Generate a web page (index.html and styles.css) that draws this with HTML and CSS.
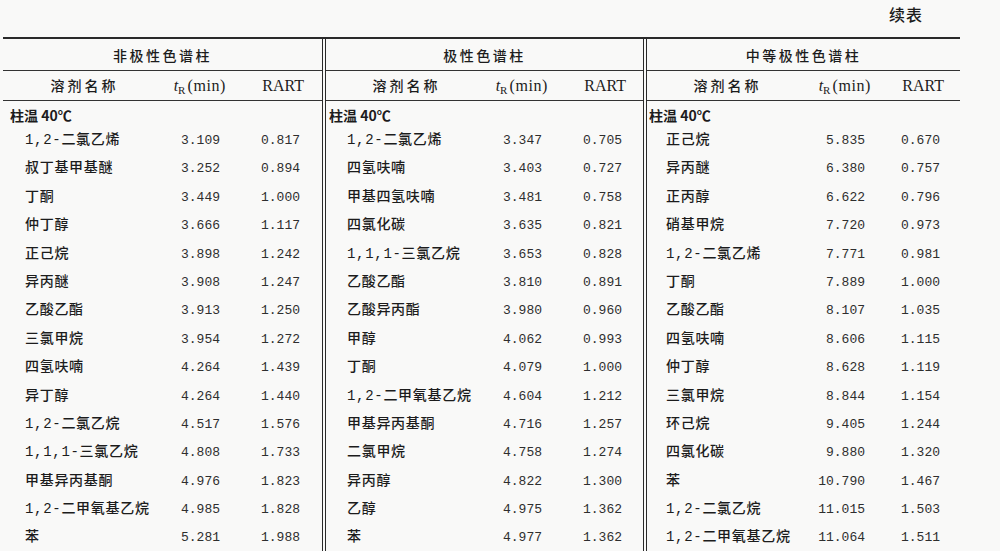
FILE: index.html
```html
<!DOCTYPE html>
<html lang="zh">
<head>
<meta charset="utf-8">
<title>续表</title>
<link rel="stylesheet" href="styles.css">
</head>
<body>
<div class="page">
  <div class="caption">续表</div>
  <div class="table">
    <section class="sec s1">
      <div class="title">非极性色谱柱</div>
      <div class="row head"><span class="hname">溶剂名称</span><span class="htr"><i>t</i><sub>R</sub><span class="par">(min)</span></span><span class="hrart">RART</span></div>
      <div class="temp">柱温 40℃</div>
      <div class="row"><span class="name">1,2-二氯乙烯</span><span class="num">3.109</span><span class="num">0.817</span></div>
      <div class="row"><span class="name">叔丁基甲基醚</span><span class="num">3.252</span><span class="num">0.894</span></div>
      <div class="row"><span class="name">丁酮</span><span class="num">3.449</span><span class="num">1.000</span></div>
      <div class="row"><span class="name">仲丁醇</span><span class="num">3.666</span><span class="num">1.117</span></div>
      <div class="row"><span class="name">正己烷</span><span class="num">3.898</span><span class="num">1.242</span></div>
      <div class="row"><span class="name">异丙醚</span><span class="num">3.908</span><span class="num">1.247</span></div>
      <div class="row"><span class="name">乙酸乙酯</span><span class="num">3.913</span><span class="num">1.250</span></div>
      <div class="row"><span class="name">三氯甲烷</span><span class="num">3.954</span><span class="num">1.272</span></div>
      <div class="row"><span class="name">四氢呋喃</span><span class="num">4.264</span><span class="num">1.439</span></div>
      <div class="row"><span class="name">异丁醇</span><span class="num">4.264</span><span class="num">1.440</span></div>
      <div class="row"><span class="name">1,2-二氯乙烷</span><span class="num">4.517</span><span class="num">1.576</span></div>
      <div class="row"><span class="name">1,1,1-三氯乙烷</span><span class="num">4.808</span><span class="num">1.733</span></div>
      <div class="row"><span class="name">甲基异丙基酮</span><span class="num">4.976</span><span class="num">1.823</span></div>
      <div class="row"><span class="name">1,2-二甲氧基乙烷</span><span class="num">4.985</span><span class="num">1.828</span></div>
      <div class="row"><span class="name">苯</span><span class="num">5.281</span><span class="num">1.988</span></div>
    </section>
    <section class="sec s2">
      <div class="title">极性色谱柱</div>
      <div class="row head"><span class="hname">溶剂名称</span><span class="htr"><i>t</i><sub>R</sub><span class="par">(min)</span></span><span class="hrart">RART</span></div>
      <div class="temp">柱温 40℃</div>
      <div class="row"><span class="name">1,2-二氯乙烯</span><span class="num">3.347</span><span class="num">0.705</span></div>
      <div class="row"><span class="name">四氢呋喃</span><span class="num">3.403</span><span class="num">0.727</span></div>
      <div class="row"><span class="name">甲基四氢呋喃</span><span class="num">3.481</span><span class="num">0.758</span></div>
      <div class="row"><span class="name">四氯化碳</span><span class="num">3.635</span><span class="num">0.821</span></div>
      <div class="row"><span class="name">1,1,1-三氯乙烷</span><span class="num">3.653</span><span class="num">0.828</span></div>
      <div class="row"><span class="name">乙酸乙酯</span><span class="num">3.810</span><span class="num">0.891</span></div>
      <div class="row"><span class="name">乙酸异丙酯</span><span class="num">3.980</span><span class="num">0.960</span></div>
      <div class="row"><span class="name">甲醇</span><span class="num">4.062</span><span class="num">0.993</span></div>
      <div class="row"><span class="name">丁酮</span><span class="num">4.079</span><span class="num">1.000</span></div>
      <div class="row"><span class="name">1,2-二甲氧基乙烷</span><span class="num">4.604</span><span class="num">1.212</span></div>
      <div class="row"><span class="name">甲基异丙基酮</span><span class="num">4.716</span><span class="num">1.257</span></div>
      <div class="row"><span class="name">二氯甲烷</span><span class="num">4.758</span><span class="num">1.274</span></div>
      <div class="row"><span class="name">异丙醇</span><span class="num">4.822</span><span class="num">1.300</span></div>
      <div class="row"><span class="name">乙醇</span><span class="num">4.975</span><span class="num">1.362</span></div>
      <div class="row"><span class="name">苯</span><span class="num">4.977</span><span class="num">1.362</span></div>
    </section>
    <section class="sec s3">
      <div class="title">中等极性色谱柱</div>
      <div class="row head"><span class="hname">溶剂名称</span><span class="htr"><i>t</i><sub>R</sub><span class="par">(min)</span></span><span class="hrart">RART</span></div>
      <div class="temp">柱温 40℃</div>
      <div class="row"><span class="name">正己烷</span><span class="num">5.835</span><span class="num">0.670</span></div>
      <div class="row"><span class="name">异丙醚</span><span class="num">6.380</span><span class="num">0.757</span></div>
      <div class="row"><span class="name">正丙醇</span><span class="num">6.622</span><span class="num">0.796</span></div>
      <div class="row"><span class="name">硝基甲烷</span><span class="num">7.720</span><span class="num">0.973</span></div>
      <div class="row"><span class="name">1,2-二氯乙烯</span><span class="num">7.771</span><span class="num">0.981</span></div>
      <div class="row"><span class="name">丁酮</span><span class="num">7.889</span><span class="num">1.000</span></div>
      <div class="row"><span class="name">乙酸乙酯</span><span class="num">8.107</span><span class="num">1.035</span></div>
      <div class="row"><span class="name">四氢呋喃</span><span class="num">8.606</span><span class="num">1.115</span></div>
      <div class="row"><span class="name">仲丁醇</span><span class="num">8.628</span><span class="num">1.119</span></div>
      <div class="row"><span class="name">三氯甲烷</span><span class="num">8.844</span><span class="num">1.154</span></div>
      <div class="row"><span class="name">环己烷</span><span class="num">9.405</span><span class="num">1.244</span></div>
      <div class="row"><span class="name">四氯化碳</span><span class="num">9.880</span><span class="num">1.320</span></div>
      <div class="row"><span class="name">苯</span><span class="num">10.790</span><span class="num">1.467</span></div>
      <div class="row"><span class="name">1,2-二氯乙烷</span><span class="num">11.015</span><span class="num">1.503</span></div>
      <div class="row"><span class="name">1,2-二甲氧基乙烷</span><span class="num">11.064</span><span class="num">1.511</span></div>
    </section>
  </div>
</div>
</body>
</html>
```

FILE: styles.css
```css
html, body {
  margin: 0;
  padding: 0;
  background: #f9f9f8;
}
body {
  width: 1000px;
  height: 551px;
  overflow: hidden;
  color: #1c1c1c;
  font-family: "Noto Sans CJK SC", sans-serif;
}
.page {
  padding: 0 40px 0 3px;
}
.caption {
  height: 37px;
  display: flex;
  align-items: center;
  justify-content: flex-end;
  padding-right: 37px;
  font-size: 16px;
  letter-spacing: 1px;
  font-weight: 500;
  line-height: 28px;
  box-sizing: border-box;
  padding-bottom: 10px;
}
.table {
  display: flex;
  border-top: 2px solid #2a2a2a;
  width: 957px;
}
.sec {
  display: flex;
  flex-direction: column;
  box-sizing: border-box;
}
.s1 { width: 319px; --pl: 22px; --pr: 22px; --tr: 70px; --ra: 80px; }
.s2 { width: 321px; border-left: 4px double #2a2a2a; --pl: 21px; --pr: 21px; --tr: 70px; --ra: 80px; }
.s3 { width: 317px; border-left: 4px double #2a2a2a; --pl: 19px; --pr: 20px; --tr: 70px; --ra: 75px; }
.title {
  height: 31px;
  border-bottom: 1px solid #333;
  display: flex;
  align-items: center;
  justify-content: center;
  font-size: 14px;
  letter-spacing: 2.5px;
  font-weight: 500;
}
.row {
  display: grid;
  grid-template-columns: 1fr var(--tr) var(--ra);
  align-items: baseline;
  height: 28.4px;
  box-sizing: border-box;
  padding: 4px var(--pr) 0 var(--pl);
  line-height: 20px;
}
.head {
  height: 30px;
  padding-top: 4px;
  border-bottom: 1px solid #333;
}
.hname {
  text-align: center;
  font-size: 14px;
  letter-spacing: 3px;
  font-weight: 500;
  padding-right: 6px;
}
.htr {
  text-align: right;
  margin-right: -6px;
  font-family: "Liberation Serif", serif;
  font-size: 16px;
  white-space: nowrap;
}
.htr i { font-style: italic; }
.htr sub {
  font-size: 11px;
  vertical-align: -3px;
  line-height: 0;
}
.par { margin-left: 2px; letter-spacing: 0.6px; }
.hrart {
  text-align: right;
  margin-right: -4px;
  font-family: "Liberation Serif", serif;
  font-size: 16px;
}
.temp {
  height: 25px;
  box-sizing: border-box;
  display: flex;
  align-items: center;
  padding-left: 7px;
  font-size: 14px;
  font-weight: 700;
  padding-top: 2px;
}
.s2 .temp { padding-left: 3px; }
.s3 .temp { padding-left: 2px; }
.name {
  font-family: "Liberation Mono", "Noto Sans CJK SC", monospace;
  font-size: 14px;
  letter-spacing: 0.7px;
  font-weight: 500;
  white-space: nowrap;
}
.num {
  text-align: right;
  font-family: "Liberation Mono", monospace;
  font-size: 13px;
  color: #2e2e2e;
}
```
